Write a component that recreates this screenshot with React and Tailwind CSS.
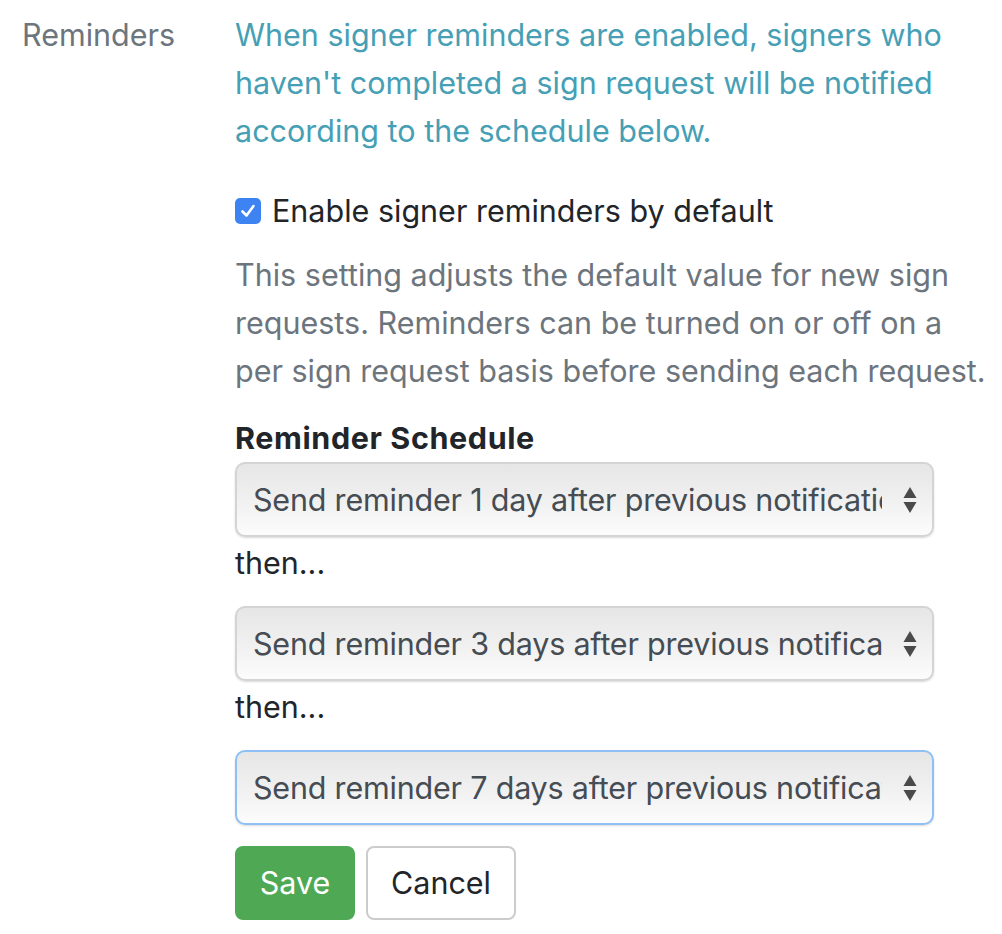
import React, { useState } from "react";

const font = { fontFamily: "Inter, 'Noto Sans', sans-serif" };

// native-looking select box (macOS style gradient)
const FakeSelect = ({ label, focused }) => (
  <div
    className={`relative flex h-[75px] w-[699px] items-center overflow-hidden rounded-[10px] border-2 bg-gradient-to-b from-[#e6e6e6] via-[#f0f0f0] to-[#fcfcfc] pl-[16px] pr-[50px] shadow-[0_1px_2px_rgba(0,0,0,0.15)] ${focused ? "border-[#8fc0f5]" : "border-[#d4d4d4]"}`}
  >
    <span className="block overflow-hidden whitespace-nowrap text-[30.5px] text-[#454c53] tracking-[-0.2px]">{label}</span>
    <svg className="absolute right-[15px] top-1/2 -translate-y-1/2" width="14" height="28" viewBox="0 0 14 28">
      <path d="M7 1 L13.5 12 L0.5 12 Z" fill="#4a4a4a" />
      <path d="M0.5 16 L13.5 16 L7 27 Z" fill="#4a4a4a" />
    </svg>
  </div>
);

export default function App() {
  const [enabled, setEnabled] = useState(true);
  const options = [
    "Send reminder 1 day after previous notification",
    "Send reminder 3 days after previous notification",
    "Send reminder 7 days after previous notification",
  ];

  return (
    <div style={font} className="min-h-screen w-[1002px] bg-white">
      <div className="flex pt-[11px]">
        <div className="w-[235px] pl-[22px] text-[30.5px] leading-[48px] text-[#6c757d]">Reminders</div>
        <div className="w-[760px]">
          <p className="w-[720px] text-[30.5px] leading-[48px] text-[#469fb5]">
            When signer reminders are enabled, signers who haven't completed a sign request will be notified according to the schedule below.
          </p>

          <label className="mt-[32px] flex h-[48px] items-center gap-[11px] text-[30.5px] text-[#212529]">
            <span
              onClick={() => setEnabled(!enabled)}
              className={`flex h-[26px] w-[26px] items-center justify-center rounded-[5px] ${enabled ? "bg-[#3d84f2]" : "border-2 border-gray-400 bg-white"}`}
            >
              {enabled && (
                <svg width="18" height="18" viewBox="0 0 18 18">
                  <path d="M3.5 9.5 L7.5 13.5 L14.5 4" fill="none" stroke="white" strokeWidth="2.6" strokeLinecap="round" strokeLinejoin="round" />
                </svg>
              )}
            </span>
            Enable signer reminders by default
          </label>

          <p className="mt-[16px] w-[756px] text-[30.5px] leading-[48px] text-[#6c757d]">
            This setting adjusts the default value for new sign requests. Reminders can be turned on or off on a per sign request basis before sending each request.
          </p>

          <div className="mt-[19px] text-[30.5px] font-bold leading-[48px] tracking-[0.6px] text-[#212529]">Reminder Schedule</div>

          <FakeSelect label={options[0]} />
          <div className="mb-[19px] mt-[2px] text-[30.5px] leading-[48px] text-[#212529]">then...</div>
          <FakeSelect label={options[1]} />
          <div className="mb-[19px] mt-[2px] text-[30.5px] leading-[48px] text-[#212529]">then...</div>
          <FakeSelect label={options[2]} focused />

          <div className="mt-[21px] flex gap-[11px]">
            <button className="h-[74px] w-[120px] rounded-[8px] bg-[#4fa954] text-[30.5px] text-white">Save</button>
            <button className="h-[74px] w-[150px] rounded-[8px] border-2 border-[#cccccc] bg-white text-[30.5px] text-[#212529]">Cancel</button>
          </div>
        </div>
      </div>
    </div>
  );
}
